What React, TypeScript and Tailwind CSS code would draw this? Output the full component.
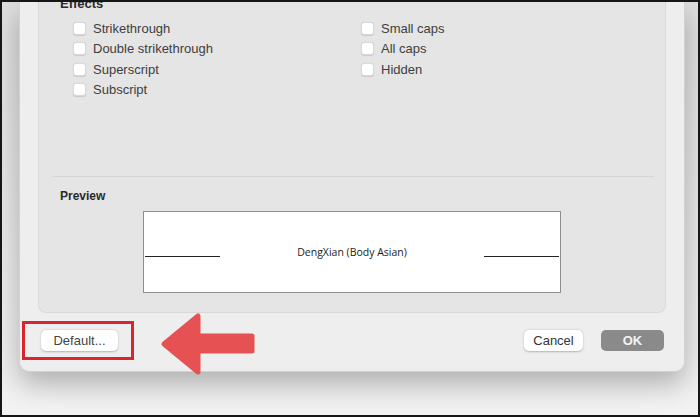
import React from "react";

function Check({ label }: { label: string }) {
  return (
    <div className="flex items-center h-[20.5px]">
      <span className="w-[13px] h-[13px] bg-white rounded-[3px] border border-[#d8d8d8] shadow-[0_0.5px_1px_rgba(0,0,0,0.12)]" />
      <span className="ml-[7px] text-[13px] leading-none text-[#3e3e3e]">{label}</span>
    </div>
  );
}

export default function App() {
  return (
    <div className="relative w-[700px] h-[417px] overflow-hidden border-2 border-[#161616] bg-gradient-to-b from-[#dedede] to-[#f3f3f3] font-['Liberation_Sans',Arial,sans-serif]">
      <div className="ml-[17px] mr-[13px] h-[370px] bg-[#eeeeee] rounded-b-[10px] border-x border-b border-[#d2d2d2] shadow-[0_12px_28px_rgba(0,0,0,0.28)] flex flex-col">
        <div className="mx-[18px] h-[311px] bg-[#e5e5e5] rounded-b-[8px] border-x border-b border-[#d9d9d9] flex flex-col">
          <div className="h-[174px] flex flex-col">
            <div className="pl-[21px] -mt-[6px] h-[16px] text-[13px] leading-[16px] font-bold text-[#2a2a2a]">Effects</div>
            <div className="flex mt-[6px] pl-[34px]">
              <div className="w-[288px] flex flex-col">
                <Check label="Strikethrough" />
                <Check label="Double strikethrough" />
                <Check label="Superscript" />
                <Check label="Subscript" />
              </div>
              <div className="flex flex-col">
                <Check label="Small caps" />
                <Check label="All caps" />
                <Check label="Hidden" />
              </div>
            </div>
          </div>
          <div className="ml-[13px] mr-[11px] h-px bg-[#d6d6d6]" />
          <div className="pl-[21px] mt-[12px] text-[12px] leading-[15px] font-bold text-[#2a2a2a]">Preview</div>
          <div className="ml-[104px] mt-[7px] w-[418px] h-[82px] bg-white border border-[#8e8e8e] flex items-center justify-between px-px">
            <div className="w-[75px] h-px bg-[#222] mt-[8px]" />
            <div className="text-[10.5px] leading-none text-[#1a1a1a] font-['Open_Sans',sans-serif]">DengXian (Body Asian)</div>
            <div className="w-[75px] h-px bg-[#222] mt-[8px]" />
          </div>
        </div>
        <div className="mt-[17px] pl-[21px] pr-[20px] flex items-center">
          <button className="w-[77px] h-[21px] bg-white rounded-[5px] shadow-[0_0.5px_2px_rgba(0,0,0,0.25)] text-[13px] text-[#444]">Default...</button>
          <div className="flex-1" />
          <button className="w-[59px] h-[21px] bg-white rounded-[5px] shadow-[0_0.5px_2px_rgba(0,0,0,0.25)] text-[13px] text-[#333]">Cancel</button>
          <button className="ml-[18px] w-[63px] h-[21px] bg-[#8a8a8a] rounded-[5px] text-[13px] font-bold text-[#f4f4f4]">OK</button>
        </div>
      </div>
      <div className="absolute left-[20px] top-[319px] w-[112px] h-[39px] border-[3px] border-[#d8262f]" />
      <svg className="absolute left-[156px] top-[308px]" width="100" height="68" viewBox="0 0 100 68">
        <path d="M6 34 L40 6 L40 26 L94 26 L94 41 L40 41 L40 62 Z" fill="#e65253" stroke="#e65253" strokeWidth="5" strokeLinejoin="round" />
      </svg>
    </div>
  );
}
